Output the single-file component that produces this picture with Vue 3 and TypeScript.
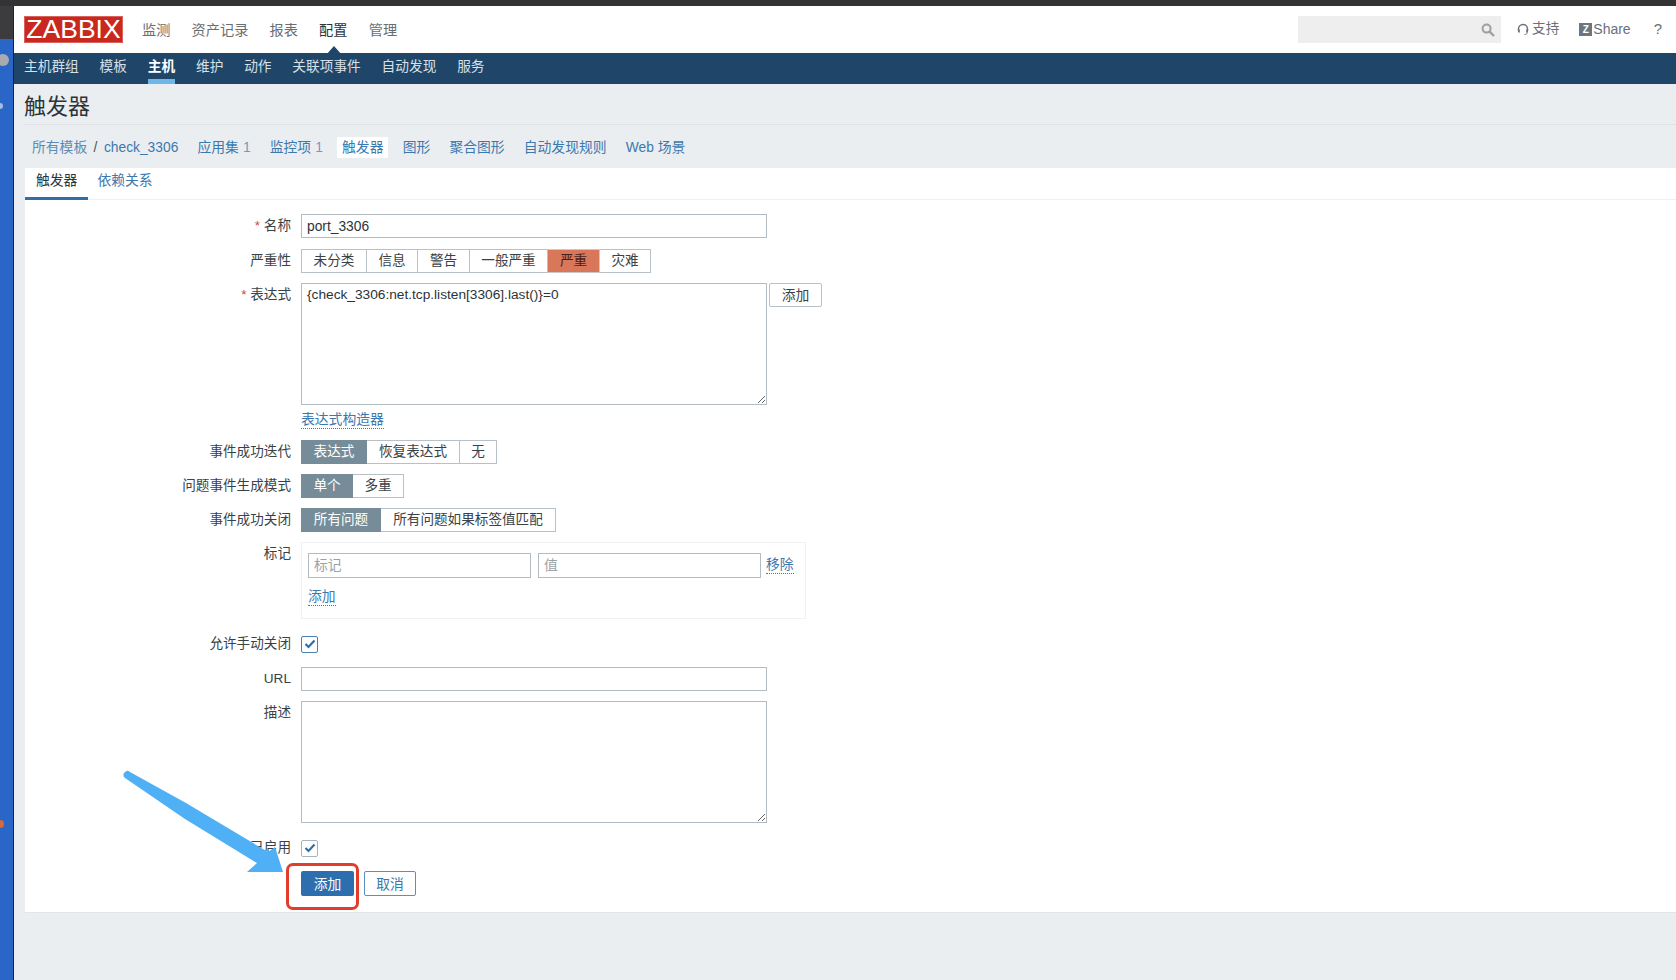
<script setup lang="ts">
const mainNav = [
  { label: '监测' }, { label: '资产记录' }, { label: '报表' }, { label: '配置', active: true }, { label: '管理' },
]
const subNav = [
  { label: '主机群组' }, { label: '模板' }, { label: '主机', active: true }, { label: '维护' },
  { label: '动作' }, { label: '关联项事件' }, { label: '自动发现' }, { label: '服务' },
]
const crumbs = [
  { label: '应用集', count: '1' }, { label: '监控项', count: '1' }, { label: '触发器', active: true },
  { label: '图形' }, { label: '聚合图形' }, { label: '自动发现规则' }, { label: 'Web 场景' },
]
const severity = [
  { label: '未分类', w: 66 }, { label: '信息', w: 51 }, { label: '警告', w: 52 },
  { label: '一般严重', w: 78 }, { label: '严重', w: 52, cls: 'sev' }, { label: '灾难', w: 51 },
]
const recovery = [
  { label: '表达式', w: 66, cls: 'on' }, { label: '恢复表达式', w: 93 }, { label: '无', w: 37 },
]
const mode = [{ label: '单个', w: 52, cls: 'on' }, { label: '多重', w: 51 }]
const closing = [{ label: '所有问题', w: 80, cls: 'on' }, { label: '所有问题如果标签值匹配', w: 175 }]
</script>

<template>
  <div class="screen">
    <div class="topline"></div>
    <div class="shell">
      <aside class="strip">
        <i class="dot grey"></i>
        <i class="dot small"></i>
        <i class="dot orange"></i>
      </aside>
      <div class="page">
        <header class="head">
          <div class="logo">ZABBIX</div>
          <nav class="mainnav">
            <a v-for="n in mainNav" :key="n.label" :class="{ active: n.active }">{{ n.label }}</a>
          </nav>
          <div class="tools">
            <div class="search">
              <svg width="14" height="14" viewBox="0 0 14 14"><circle cx="5.6" cy="5.6" r="4" fill="none" stroke="#9aa0a4" stroke-width="2"/><path d="M8.6 8.6 13 13" stroke="#9aa0a4" stroke-width="2.4"/></svg>
            </div>
            <a class="tool support">
              <svg width="12" height="13" viewBox="0 0 12 13"><path d="M1.5 8V6a4.5 4.5 0 0 1 9 0v2" fill="none" stroke="#68747c" stroke-width="1.5"/><path d="M1 6.5h1.8v3H1zM9.2 6.5H11v3H9.2z" fill="#68747c"/><path d="M10 9.5c0 1.5-1 2-2.5 2" fill="none" stroke="#68747c"/></svg>
              支持
            </a>
            <a class="tool share"><b class="zbox">Z</b>Share</a>
            <a class="tool help">?</a>
          </div>
        </header>
        <nav class="subnav">
          <a v-for="n in subNav" :key="n.label" :class="{ active: n.active }">{{ n.label }}</a>
        </nav>
        <main class="content">
          <h1 class="title">触发器</h1>
          <div class="crumbs">
            <a class="root">所有模板</a><span class="slash">/</span><a class="host">check_3306</a>
            <a v-for="c in crumbs" :key="c.label" :class="{ current: c.active }">{{ c.label }}<em v-if="c.count">{{ c.count }}</em></a>
          </div>
          <section class="panel">
            <div class="tabs">
              <a class="tab active">触发器</a>
              <a class="tab second">依赖关系</a>
            </div>
            <form class="form">
              <div class="row name-row">
                <label><span class="req">*</span> 名称</label>
                <input class="field" value="port_3306" />
              </div>
              <div class="row">
                <label>严重性</label>
                <div class="seg"><span v-for="s in severity" :key="s.label" :class="s.cls" :style="{ width: s.w + 'px' }">{{ s.label }}</span></div>
              </div>
              <div class="row top">
                <label><span class="req">*</span> 表达式</label>
                <div class="stack">
                  <div class="expr">
                    <textarea class="field area">{check_3306:net.tcp.listen[3306].last()}=0</textarea>
                    <button type="button" class="plain small-btn">添加</button>
                  </div>
                  <a class="dotted builder">表达式构造器</a>
                </div>
              </div>
              <div class="row">
                <label>事件成功迭代</label>
                <div class="seg"><span v-for="s in recovery" :key="s.label" :class="s.cls" :style="{ width: s.w + 'px' }">{{ s.label }}</span></div>
              </div>
              <div class="row">
                <label>问题事件生成模式</label>
                <div class="seg"><span v-for="s in mode" :key="s.label" :class="s.cls" :style="{ width: s.w + 'px' }">{{ s.label }}</span></div>
              </div>
              <div class="row">
                <label>事件成功关闭</label>
                <div class="seg"><span v-for="s in closing" :key="s.label" :class="s.cls" :style="{ width: s.w + 'px' }">{{ s.label }}</span></div>
              </div>
              <div class="row top">
                <label>标记</label>
                <div class="tags">
                  <div class="tagline">
                    <input class="field tag" placeholder="标记" />
                    <input class="field tag" placeholder="值" />
                    <a class="dotted">移除</a>
                  </div>
                  <a class="dotted addtag">添加</a>
                </div>
              </div>
              <div class="row check-row">
                <label>允许手动关闭</label>
                <span class="check focus"><svg width="12" height="10" viewBox="0 0 12 10"><path d="M1.5 5 4.5 8 10.5 1.5" fill="none" stroke="#2f6fa8" stroke-width="2.2"/></svg></span>
              </div>
              <div class="row">
                <label>URL</label>
                <input class="field" />
              </div>
              <div class="row top">
                <label>描述</label>
                <textarea class="field area"></textarea>
              </div>
              <div class="row check-row">
                <label>已启用</label>
                <span class="check"><svg width="12" height="10" viewBox="0 0 12 10"><path d="M1.5 5 4.5 8 10.5 1.5" fill="none" stroke="#2f6fa8" stroke-width="2.2"/></svg></span>
              </div>
              <div class="row actions">
                <label></label>
                <button type="button" class="primary">添加</button>
                <button type="button" class="cancel">取消</button>
              </div>
            </form>
          </section>
        </main>
      </div>
    </div>
    <svg class="arrow" viewBox="0 0 1676 980">
      <path d="M130 772 L186 803 L268 852 L275 847 L283 872 L247 872 L257 863 L185 819 L125 778 A3.6 3.6 0 0 1 130 772 Z" fill="#4fb0f5"/>
    </svg>
    <div class="callout"></div>
  </div>
</template>

<style>
html, body { margin: 0; background: #ebeef0; }
</style>

<style scoped>
.screen { position: relative; width: 1676px; height: 980px; overflow: hidden; background: #ebeef0; font-family: "Liberation Sans", "Noto Sans CJK SC", sans-serif; font-size: 14px; color: #2b3438; }
.topline { height: 6px; background: #333336; }
.shell { display: flex; height: 974px; }
.strip { position: relative; flex: 0 0 13px; border-right: 1px solid #0c2450; background: linear-gradient(#3c3c3e 0 33px, #2a66c8 33px); }
.dot { position: absolute; display: block; border-radius: 50%; }
.grey { left: -3px; top: 48px; width: 12px; height: 12px; background: #a9abb0; }
.small { left: -3px; top: 97px; width: 6px; height: 6px; background: #a7bde0; }
.orange { left: -4px; top: 814px; width: 8px; height: 8px; background: #d9683c; }
.page { flex: 1; min-width: 0; }
.head { display: flex; align-items: center; height: 47px; padding-left: 10px; background: #fff; }
.logo { box-sizing: border-box; width: 99px; height: 27px; background: #c9281e; border: 1px solid #d9635c; color: #fff; font-size: 26.5px; line-height: 25px; text-align: center; }
.mainnav { display: flex; gap: 21.2px; margin-left: 19px; color: #686f74; font-size: 14.2px; line-height: 24px; }
.mainnav a { position: relative; }
.mainnav a.active { color: #2b3438; }
.mainnav a.active::after { content: ""; position: absolute; left: 7px; top: 28px; border-left: 8px solid transparent; border-right: 8px solid transparent; border-bottom: 9px solid #1f4668; }
.tools { display: flex; align-items: center; margin-left: auto; height: 27px; }
.search { box-sizing: border-box; display: flex; align-items: center; justify-content: flex-end; width: 203px; height: 27px; padding-right: 6px; background: #eeeeee; }
.tool { display: flex; align-items: center; margin-top: -1px; color: #687178; font-size: 13.6px; line-height: 20px; }
.support { gap: 3px; margin-left: 16px; }
.share { margin-left: 20px; font-size: 14px; }
.zbox { width: 13px; height: 13px; margin-right: 1px; background: #6d767c; color: #fff; font-size: 10px; line-height: 13px; text-align: center; }
.help { margin-left: 23px; margin-right: 14px; font-size: 15px; }
.subnav { display: flex; gap: 20.8px; height: 31px; padding-left: 10px; background: #1f4668; color: #d6e0e8; font-size: 13.7px; line-height: 27px; }
.subnav a { position: relative; }
.subnav a.active { color: #fff; font-weight: 700; }
.subnav a.active::after { content: ""; position: absolute; left: 0; right: 0; top: 26px; height: 5px; background: #6fb6e4; }
.content { padding-left: 10px; }
.title { box-sizing: border-box; height: 41px; margin: 0; border-bottom: 1px solid #e0e3e6; font-size: 22px; font-weight: 400; line-height: 45px; color: #2b3438; }
.crumbs { box-sizing: border-box; display: flex; align-items: baseline; gap: 19.2px; height: 43px; padding: 12px 0 0 8px; color: #3b78ae; font-size: 13.8px; line-height: 21px; }
.crumbs em { margin-left: 4px; font-style: normal; color: #6e9cc2; }
.crumbs .root { margin-right: -13px; color: #5b8bb6; }
.crumbs .slash { margin-right: -12.5px; color: #4a5358; }
.crumbs a.current { margin: 0 -5px; padding: 0 5px; height: 21px; background: #fff; }
.panel { margin-left: 1px; background: #fff; border-bottom: 1px solid #e3e6e9; }
.tabs { display: flex; height: 32px; border-bottom: 1px solid #eef0f2; box-sizing: border-box; }
.tab { box-sizing: border-box; height: 32px; padding: 0 11px; color: #3b78ae; font-size: 13.8px; line-height: 26px; }
.tab.second { padding-left: 9px; }
.tab.active { color: #2b3438; border-bottom: 3px solid #2f6fa8; }
.form { display: flex; flex-direction: column; padding: 14px 0 16px; }
.row { display: flex; align-items: center; margin-bottom: 10px; }
.name-row { margin-bottom: 11px; }
.row.top { align-items: flex-start; }
.row > label { flex: 0 0 266px; margin-right: 10px; text-align: right; font-size: 13.6px; line-height: 24px; color: #3a4246; }
.req { color: #d9472b; }
.field { box-sizing: border-box; display: block; width: 466px; height: 24px; margin: 0; padding: 0 5px; border: 1px solid #b3bcc2; border-radius: 0; outline: none; background: #fff; color: #2b3438; font: 13.8px "Liberation Sans", "Noto Sans CJK SC", sans-serif; }
.field::placeholder { color: #9aa2a7; }
.area { height: 122px; padding: 3px 5px; font-size: 13.7px; line-height: 16px; resize: both; }
.seg { display: flex; height: 24px; border-radius: 2px; }
.seg span { box-sizing: border-box; height: 24px; border: 1px solid #b8c1c7; border-left-width: 0; background: #fff; color: #3a4246; font-size: 13.6px; line-height: 21px; text-align: center; }
.seg span:first-child { border-left-width: 1px; }
.seg span.on { background: #768d99; border-color: #768d99; color: #fff; }
.seg span.sev { background: #d9775b; border-color: #c9c9c9; color: #4a2118; }
.stack { display: flex; flex-direction: column; }
.expr { display: flex; align-items: flex-start; gap: 2px; }
.plain, .cancel, .primary { box-sizing: border-box; margin: 0; padding: 0 0 2px; border-radius: 2px; font: 13.8px "Liberation Sans", "Noto Sans CJK SC", sans-serif; }
.plain { width: 53px; height: 24px; border: 1px solid #b8c1c7; background: #fff; color: #3a4246; }
.dotted { align-self: flex-start; border-bottom: 1px dotted #3b78ae; color: #3b78ae; font-size: 13.8px; line-height: 17px; }
.builder { margin-top: 6px; margin-bottom: 1px; }
.tags { box-sizing: border-box; width: 505px; height: 77px; padding: 10px 6px; border: 1px solid #f0f2f3; display: flex; flex-direction: column; }
.tagline { display: flex; align-items: center; gap: 7px; }
.tag { width: 223px; height: 25px; }
.tagline .dotted { margin-left: -2px; margin-top: -2px; align-self: center; }
.addtag { margin-top: 10px; }
.check-row { margin-top: 3px; margin-bottom: 11px; }
.check { box-sizing: border-box; display: flex; align-items: center; justify-content: center; width: 17px; height: 17px; border: 1px solid #a8b3ba; border-radius: 2px; background: #fff; }
.check.focus { border-color: #4a7fb0; }
.actions { margin-bottom: 0; margin-top: 0; height: 25px; }
.primary { width: 53px; height: 25px; border: none; background: #2d6fae; color: #fff; }
.cancel { width: 52px; height: 25px; margin-left: 10px; border: 1px solid #5b8fbe; background: #fff; color: #3b78ae; }
.arrow { position: absolute; left: 0; top: 0; width: 1676px; height: 980px; pointer-events: none; }
.callout { position: absolute; left: 286px; top: 863px; box-sizing: border-box; width: 73px; height: 47px; border: 3px solid #e23d2c; border-radius: 7px; pointer-events: none; }
</style>
